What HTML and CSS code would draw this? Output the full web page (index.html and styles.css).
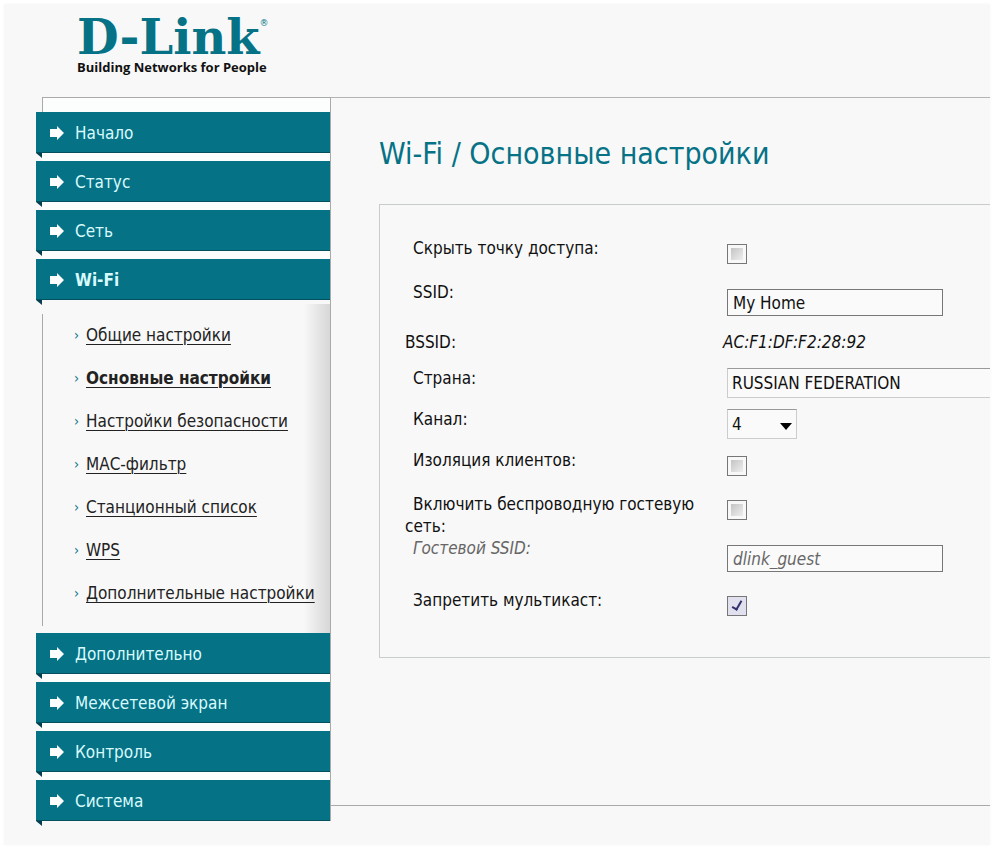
FILE: index.html
```html
<!DOCTYPE html>
<html lang="ru">
<head>
    <meta charset="utf-8">
    <title>D-Link - Wi-Fi</title>
    <link rel="stylesheet" href="styles.css">
</head>
<body>
    <div class="page">
        <header class="header">
            <div class="logo">D-Link<sup>®</sup></div>
            <div class="slogan">Building Networks for People</div>
        </header>
        <div class="columns">
            <!-- LEFT MENU -->
            <nav class="sidebar">
                <a class="item" href="#"><svg class="arrow" viewBox="0 0 14 14"><path d="M0 3h7V0l7 7-7 7v-3H0z"/></svg>Начало</a>
                <a class="item" href="#"><svg class="arrow" viewBox="0 0 14 14"><path d="M0 3h7V0l7 7-7 7v-3H0z"/></svg>Статус</a>
                <a class="item" href="#"><svg class="arrow" viewBox="0 0 14 14"><path d="M0 3h7V0l7 7-7 7v-3H0z"/></svg>Сеть</a>
                <a class="item active" href="#"><svg class="arrow" viewBox="0 0 14 14"><path d="M0 3h7V0l7 7-7 7v-3H0z"/></svg>Wi-Fi</a>
                <ul class="submenu">
                    <li><a href="#">Общие настройки</a></li>
                    <li><a class="current" href="#">Основные настройки</a></li>
                    <li><a href="#">Настройки безопасности</a></li>
                    <li><a href="#">МАС-фильтр</a></li>
                    <li><a href="#">Станционный список</a></li>
                    <li><a href="#">WPS</a></li>
                    <li><a href="#">Дополнительные настройки</a></li>
                </ul>
                <a class="item" href="#"><svg class="arrow" viewBox="0 0 14 14"><path d="M0 3h7V0l7 7-7 7v-3H0z"/></svg>Дополнительно</a>
                <a class="item" href="#"><svg class="arrow" viewBox="0 0 14 14"><path d="M0 3h7V0l7 7-7 7v-3H0z"/></svg>Межсетевой экран</a>
                <a class="item" href="#"><svg class="arrow" viewBox="0 0 14 14"><path d="M0 3h7V0l7 7-7 7v-3H0z"/></svg>Контроль</a>
                <a class="item" href="#"><svg class="arrow" viewBox="0 0 14 14"><path d="M0 3h7V0l7 7-7 7v-3H0z"/></svg>Система</a>
            </nav>
            <!-- SETTINGS -->
            <main class="content">
                <h1>Wi-Fi / Основные настройки</h1>
                <form class="settings" action="#">
                    <div class="row">
                        <label for="hide">Скрыть точку доступа:</label>
                        <input type="checkbox" id="hide">
                    </div>
                    <div class="row row-text">
                        <label for="ssid">SSID:</label>
                        <input type="text" id="ssid" value="My Home">
                    </div>
                    <div class="row row-static">
                        <span class="name">BSSID:</span>
                        <span class="bssid">AC:F1:DF:F2:28:92</span>
                    </div>
                    <div class="row row-select">
                        <label for="country">Страна:</label>
                        <select id="country" class="country"><option>RUSSIAN FEDERATION</option></select>
                    </div>
                    <div class="row row-select">
                        <label for="channel">Канал:</label>
                        <div class="channel">
                            <select id="channel"><option>4</option></select>
                        </div>
                    </div>
                    <div class="row">
                        <label for="isolation">Изоляция клиентов:</label>
                        <input type="checkbox" id="isolation">
                    </div>
                    <div class="row">
                        <label for="guest">Включить беспроводную гостевую сеть:</label>
                        <input type="checkbox" id="guest">
                    </div>
                    <div class="row row-text guest">
                        <label for="guest-ssid">Гостевой SSID:</label>
                        <input type="text" id="guest-ssid" value="dlink_guest">
                    </div>
                    <div class="row">
                        <label for="multicast">Запретить мультикаст:</label>
                        <input type="checkbox" id="multicast" checked>
                    </div>
                </form>
            </main>
        </div>
    </div>
</body>
</html>
```

FILE: styles.css
```css
* {
    box-sizing: border-box;
}
body {
    margin: 0;
    padding: 4px;
    background: #fff;
    color: #111;
    font-family: "DejaVu Sans Condensed", "DejaVu Sans", sans-serif;
    font-size: 17px;
    line-height: 22px;
}
.page {
    background: #f8f8f8;
    box-shadow: 0 0 4px #f8f8f8;
    padding-bottom: 24px;
}
.header {
    height: 93px;
    padding: 12px 0 0 73px;
}
.logo {
    height: 43px;
    color: #067286;
    font-family: "DejaVu Serif", serif;
    font-weight: bold;
    font-size: 48px;
    line-height: 43px;
    white-space: nowrap;
}
.logo sup {
    font-family: "DejaVu Sans", sans-serif;
    font-size: 9px;
    font-weight: normal;
    line-height: 9px;
    vertical-align: 28px;
}
.slogan {
    color: #111;
    font-family: "Open Sans", sans-serif;
    font-weight: bold;
    font-size: 13px;
    line-height: 16px;
}
.columns {
    display: flex;
    align-items: flex-start;
}

/* left menu */
.sidebar {
    width: 289px;
    flex: none;
    margin-left: 38px;
    padding-top: 14px;
    border: 1px solid #aaa;
    border-bottom: 0;
    border-left: 0;
    background: linear-gradient(#aaa, #aaa) no-repeat 0 0 / 1px 15px #fcfdfd;
}
.item {
    position: relative;
    display: flex;
    align-items: center;
    height: 41px;
    margin: 0 0 8px -6px;
    padding: 2px 0 0 14px;
    background: #067286;
    border-bottom: 1px solid #04505f;
    color: #d9fafd;
    font-size: 17px;
    text-decoration: none;
}
.item:last-child {
    margin-bottom: 0;
}
.item::after {
    content: "";
    position: absolute;
    left: 0;
    top: 41px;
    border-top: 5px solid #033f4c;
    border-left: 6px solid transparent;
}
.active {
    font-weight: bold;
    margin-bottom: 0;
}
.arrow {
    width: 14px;
    height: 14px;
    margin-right: 11px;
    fill: #fff;
}
.submenu {
    list-style: none;
    margin: 0;
    padding: 13px 0 19px 32px;
    background:
        linear-gradient(#aaa, #aaa) no-repeat 0 14px / 1px 312px,
        linear-gradient(to right, rgba(215, 213, 214, 0), #d8d6d7) no-repeat 100% 4px / 26px 100%,
        #f8f8f8;
}
.submenu li {
    display: flex;
    align-items: center;
    height: 43px;
    white-space: nowrap;
}
.submenu li::before {
    content: "›";
    width: 12px;
    color: #067286;
    font-size: 14px;
}
.submenu a {
    color: #222;
    text-underline-offset: 3px;
    text-decoration-thickness: 1px;
}
.submenu .current {
    font-weight: bold;
}

/* settings */
.content {
    flex: 1;
    min-width: 0;
    padding: 36px 0 147px 48px;
    border-top: 1px solid #b4b4b4;
    border-bottom: 1px solid #aaa;
}
h1 {
    margin: 0 0 30px;
    color: #067286;
    font-weight: normal;
    font-size: 30px;
    line-height: 40px;
}
.settings {
    padding: 32px 0 24px 25px;
    border: 1px solid #c8cccc;
    border-right: 0;
}
.row {
    display: flex;
    align-items: flex-start;
    min-height: 44px;
}
.row label, .name {
    width: 322px;
    flex: none;
    padding-right: 16px;
}
.row label {
    text-indent: 8px;
}
.row-text {
    min-height: 50px;
}
.row-static {
    min-height: 36px;
}
.row-select {
    min-height: 41px;
}
.guest {
    min-height: 52px;
}
.bssid {
    font-style: italic;
    margin-left: -4px;
}
input, select {
    font: inherit;
    color: #111;
    margin: 0;
}
input[type="checkbox"] {
    appearance: none;
    width: 20px;
    height: 20px;
    margin-top: 7px;
    border: 1px solid #777;
    background: linear-gradient(135deg, #c4c4c4, #eee) content-box #e6e6e8;
    padding: 3px;
}
input[type="checkbox"]:checked {
    background: #e0e0ee;
    padding: 0;
}
input[type="checkbox"]:checked::before {
    content: "";
    display: block;
    width: 4px;
    height: 9px;
    margin: 2px 0 0 6px;
    border: solid #33306e;
    border-width: 0 2px 2px 0;
    transform: rotate(30deg);
}
input[type="text"] {
    width: 216px;
    height: 27px;
    margin-top: 8px;
    padding: 0 5px;
    border: 1px solid #777;
    background: #fafafa;
}
select {
    appearance: none;
    width: 70px;
    height: 30px;
    padding: 0 4px;
    border: 1px solid #ccc;
    border-top-color: #999;
    border-radius: 0;
    background: #fafafa;
}
.row-select {
    padding-top: 1px;
}
.row-select label {
    margin-top: -1px;
}
.country {
    flex: 1;
    border-right: 0;
}
.channel {
    position: relative;
}
.channel::after {
    content: "";
    position: absolute;
    right: 5px;
    top: 14px;
    border: 6px solid transparent;
    border-top: 7px solid #000;
    border-bottom: 0;
    pointer-events: none;
}
.guest label, .guest input {
    color: #666;
    font-style: italic;
}
```
